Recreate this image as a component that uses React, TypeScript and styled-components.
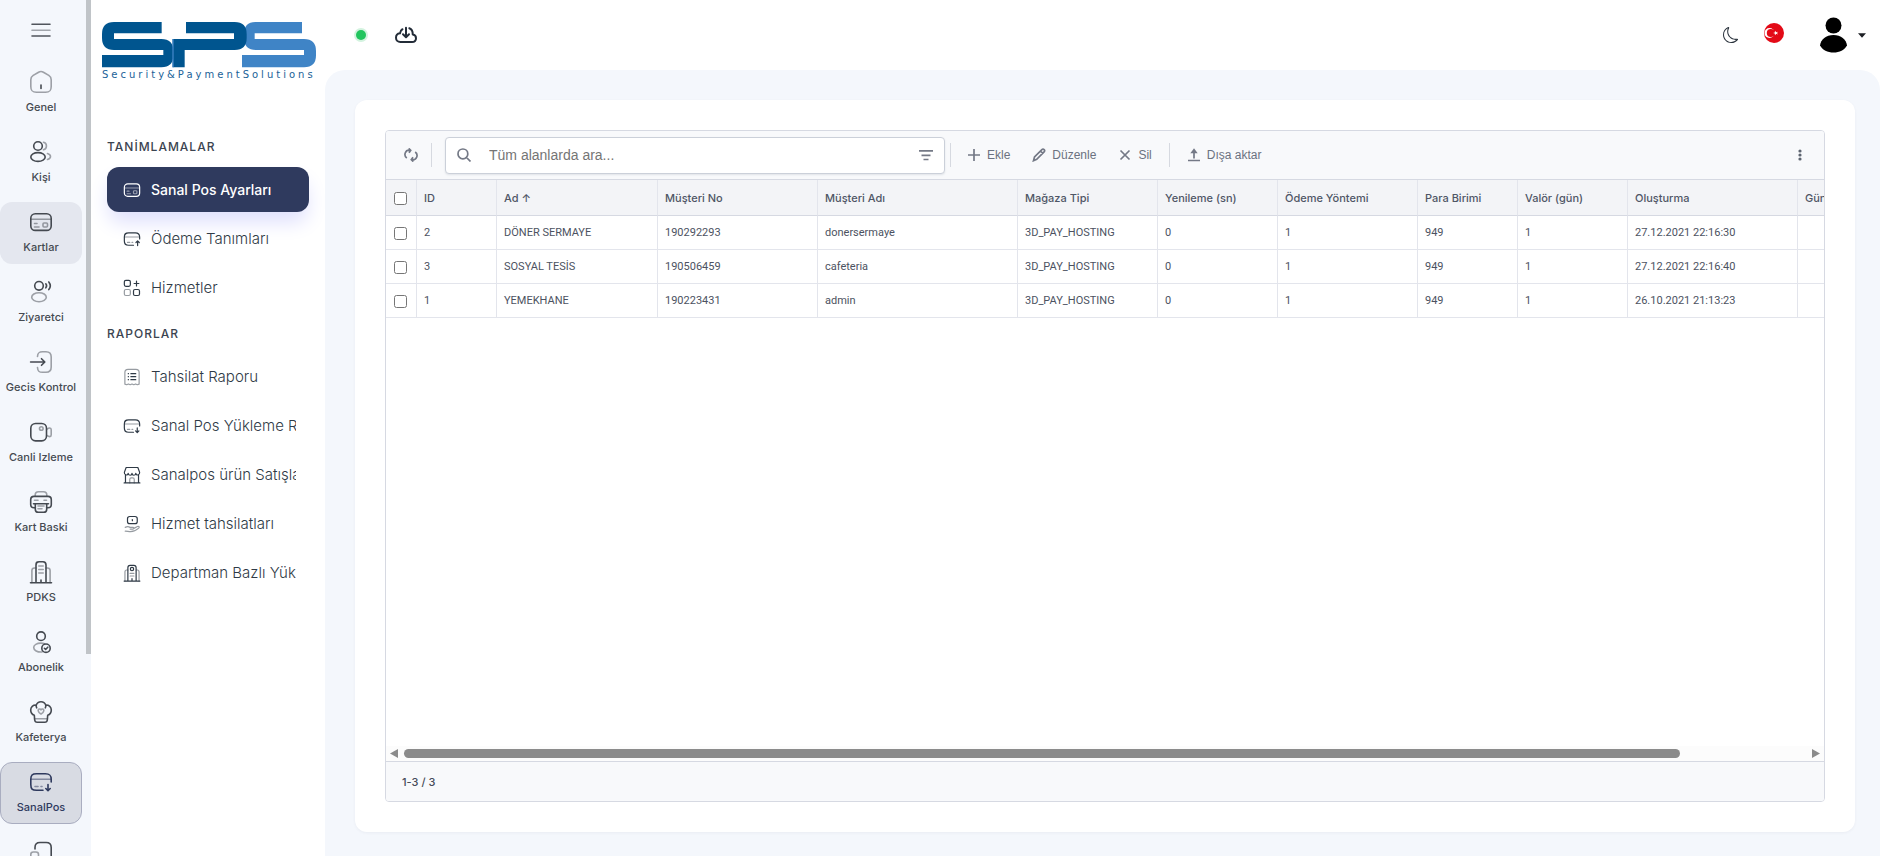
import React from 'react';
import styled, { createGlobalStyle, css } from 'styled-components';
import { BsMoon } from 'react-icons/bs';

const GlobalStyle = createGlobalStyle`
  *, *::before, *::after { box-sizing: border-box; }
  body { margin: 0; background: #fff; font-family: Inter, "Liberation Sans", sans-serif; color: #3f4650; }
  button, input { font: inherit; color: inherit; }
  button { background: none; border: 0; padding: 0; cursor: pointer; }
  a { color: inherit; text-decoration: none; }
`;

/* ---------- icons ---------- */

const IconSvg = styled.svg<{ $size: number }>`
  display: block;
  flex: none;
  width: ${p => p.$size}px;
  height: ${p => p.$size}px;
  fill: none;
  stroke: currentColor;
  stroke-width: 1.6;
  stroke-linecap: round;
  stroke-linejoin: round;
`;

const Faint = styled.g`
  opacity: 0.5;
`;

const drawings = {
  home: (
    <>
      <Faint><path d="M1.8 9.8c0-2.2.6-3.2 2.4-4.4L9.600 2.200c1.700-1 3.100-1 4.800 0l5.400 3.200c1.800 1.200 2.400 2.200 2.400 4.400v6.700c0 4.300-1.300 5.700-5.600 5.700H7.400c-4.300 0-5.600-1.400-5.600-5.700z" /></Faint>
      <path d="M12 15v3.500" />
    </>
  ),
  people: (
    <>
      <circle cx="9" cy="6" r="4.300" />
      <ellipse cx="9" cy="17" rx="7.200" ry="4.400" />
      <Faint><path d="M14.500 2.300a3.800 3.800 0 0 1 0 7.400M18.500 13.500c4 1.200 4 4.800 0 6" /></Faint>
    </>
  ),
  card: (
    <>
      <rect x="1.800" y="3.800" width="20.400" height="16.600" rx="4.500" />
      <Faint><path d="M2 9.300h20M5.500 13.500H8M5.500 17H10" /><rect x="14" y="13" width="4.500" height="4" rx="1" /></Faint>
    </>
  ),
  visitor: (
    <>
      <circle cx="10" cy="5.800" r="4.300" />
      <path d="M16.800 3.800q1.600 2 0 4M19.800 2q3 3.800 0 7.600" />
      <Faint><ellipse cx="10" cy="17.200" rx="7.300" ry="4.500" /></Faint>
    </>
  ),
  enter: (
    <>
      <Faint><path d="M8.500 6.500c.2-3.500 1.300-4.800 5-4.800h3.500c3.800 0 5.200 1.400 5.200 5.200v10.200c0 3.800-1.400 5.200-5.200 5.200h-3.500c-3.700 0-4.800-1.300-5-4.800" /></Faint>
      <path d="M1.600 12h14M12.500 8.700 15.800 12l-3.300 3.300" />
    </>
  ),
  camera: (
    <>
      <rect x="1.800" y="3.500" width="15.700" height="17.400" rx="4.800" />
      <Faint><circle cx="12.300" cy="8.500" r="1.800" /><path d="M17.700 9.300c2.300-1.600 4.500-2 4.500.5v5c0 2.500-2.200 2.100-4.500.5" /></Faint>
    </>
  ),
  printer: (
    <>
      <Faint><path d="M6.200 6.200V5c0-2.400 1-3.300 3.300-3.300h5c2.300 0 3.300.9 3.300 3.300v1.200M5.500 10.200H9M15 10.200h2.500M9 16h6M9 18.800h4" /></Faint>
      <path d="M6.300 17.800H5c-2.300 0-3.300-1-3.300-3.300V9.700c0-2.300 1-3.300 3.300-3.300h14c2.300 0 3.300 1 3.300 3.300v4.800c0 2.300-1 3.300-3.300 3.300h-1.300" />
      <path d="M4.500 13.700h15M6.300 13.700v5.500c0 2.300.8 3.100 3.100 3.100h5.200c2.300 0 3.100-.8 3.100-3.100v-5.500" />
    </>
  ),
  building: (
    <>
      <path d="M1.500 22.800h21M7 22.800V5c0-2.500.8-3.300 3-3.300h4c2.200 0 3 .8 3 3.300v17.800M12 22.500V20" />
      <Faint><path d="M7 8H5.500C3.600 8 2.900 8.700 2.900 10.600v12M17 8h1.500c1.900 0 2.600.7 2.600 2.600v12M9.800 6h4.400M9.800 9.500h4.400M9.800 13h4.400" /></Faint>
    </>
  ),
  tower: (
    <>
      <path d="M1.500 22.800h21M6.500 22.800V5c0-2.500.8-3.300 3-3.300h5c2.200 0 3 .8 3 3.300v17.800M12 22.500V19.500" />
      <circle cx="12" cy="6.800" r="2.200" />
      <Faint><path d="M6.500 8H5C3.300 8 2.600 8.700 2.600 10.600v12M17.500 8H19c1.700 0 2.400.7 2.400 2.600v12M9.500 12.500h5M9.500 16h5" /></Faint>
    </>
  ),
  subscriber: (
    <>
      <circle cx="12" cy="6.200" r="4.300" />
      <Faint><path d="M13 22c-4.600.3-8.300-1.600-8.300-4.500 0-2.600 3.200-4.400 7.300-4.400 1.600 0 2.600.2 3.600.6" /></Faint>
      <circle cx="17" cy="18.200" r="4.200" />
      <path d="m15.400 18.300 1.200 1.200 2.200-2.300" />
    </>
  ),
  chef: (
    <>
      <path d="M5.300 15.300C3 14.500 1.700 12.300 1.700 10c0-3 2.300-5.200 5.600-4.900C8 3 9.800 1.700 12 1.700S16 3 16.700 5.100c3.300-.3 5.600 1.900 5.600 4.900 0 2.300-1.300 4.500-3.600 5.300l-.4 4.700c-.2 1.700-.9 2.300-2.500 2.300H8.200c-1.600 0-2.300-.6-2.500-2.300zM7.300 5.100c-.3 1 0 2 .4 2.700M16.700 5.100c.3 1 0 2-.4 2.700" />
      <Faint><path d="M5.600 18.800h12.800M12 14c-3.500-2-3.300-4.800-1.700-5 .8-.1 1.400.3 1.700.9.300-.6.900-1 1.700-.9 1.600.2 1.800 3-1.700 5z" /></Faint>
    </>
  ),
  cardDown: (
    <>
      <path d="M14 20.300H7.500c-4.300 0-5.700-1.400-5.700-5.700V9.500c0-4.300 1.400-5.700 5.700-5.700h9c4.300 0 5.700 1.400 5.700 5.700v2.500" />
      <path d="M19 14.500v6M16.800 18.500 19 20.700l2.200-2.200" />
      <Faint><path d="M2 9.300h20M6 16.500h3M12 16.500h1" /></Faint>
    </>
  ),
  cardUp: (
    <>
      <path d="M14 20.300H7.500c-4.300 0-5.700-1.400-5.700-5.700V9.500c0-4.300 1.400-5.700 5.700-5.700h9c4.300 0 5.700 1.400 5.700 5.700v2.500" />
      <path d="M19.500 20.700v-6M17.300 16.700l2.200-2.200 2.200 2.200" />
      <Faint><path d="M2 9.300h20M6 16.500h3M12 16.500h1" /></Faint>
    </>
  ),
  devices: (
    <>
      <path d="M6 9V7.500c0-3.700 1.300-5 5-5h6.200c3.700 0 5 1.300 5 5V17c0 3.700-1.300 5-5 5H13" />
      <Faint><rect x="1.800" y="12" width="7.700" height="10.500" rx="2.500" /></Faint>
    </>
  ),
  widgets: (
    <>
      <rect x="1.800" y="1.800" width="8" height="8" rx="2" />
      <path d="M18 2.800v6.400M14.800 6h6.400" />
      <rect x="14" y="14" width="8" height="8" rx="2" />
      <Faint><rect x="1.800" y="14" width="8" height="8" rx="2" /></Faint>
    </>
  ),
  report: (
    <>
      <Faint><path d="M2.500 21.500V6c0-3.200 1-4.200 4.200-4.200h10.600c3.200 0 4.200 1 4.200 4.200v15.500l-2.400.8-2.300-1-2.400 1-2.400-1-2.400 1-2.400-1-2.300 1z" /></Faint>
      <path d="M7 7.500h.3M10.500 7.500H17M7 11.500h.3M10.500 11.500H17M7 15.500h.3M10.500 15.500H17" />
    </>
  ),
  shop: (
    <>
      <path d="M1.500 22.500h21M3.300 12v10.500M20.700 12v10.500M4.200 2h15.600l2.400 6.500c.3 4-4.300 4.700-5.100 1.200-.8 3.500-4.900 3.500-5.100 0-.2 3.500-4.300 3.500-5.100 0-.8 3.500-5.400 2.800-5.100-1.200z" />
      <Faint><path d="M9 22.500V18c0-1.500.6-2.200 2-2.200h2c1.400 0 2 .7 2 2.200v4.500" /></Faint>
    </>
  ),
  handMoney: (
    <>
      <rect x="6" y="2" width="13" height="9.500" rx="3" />
      <path d="M12.500 6v1.500" />
      <Faint><path d="M3 16.500c2.500-1.500 4.500-1.300 6.500 0h3.500c2 0 2 2.200 0 2.200H9.500M14.500 17.800l4.800-2.500c1.800-.8 3.200.8 1.700 2.200-3.500 3.200-6.500 4.700-11 4.700-2.500 0-4.500-.7-7-.7" /></Faint>
    </>
  ),
  menu: (
    <>
      <path d="M3 6.300h18M3 18h18" />
      <Faint><path d="M3 12.200h18" /></Faint>
    </>
  ),
};

type IconName = keyof typeof drawings;

const Icon = ({ name, size = 24 }: { name: IconName; size?: number }) => (
  <IconSvg $size={size} viewBox="0 0 24 24" aria-hidden="true">{drawings[name]}</IconSvg>
);

const ToolSvg = styled.svg`
  display: block;
  flex: none;
  width: 14px;
  height: 14px;
  fill: none;
  stroke: #747986;
  stroke-width: 1.7;
`;

const toolDrawings = {
  refresh: <path d="M6.500 2.200H5.600A4.300 4.300 0 0 0 2.800 10M4.700.4 6.700 2.300 5 4.800M7.600 11.800h.8A4.300 4.300 0 0 0 11.200 4M9.300 13.600l-2-1.900L9 9.200" />,
  search: <path d="M10.800 5.900a4.900 4.900 0 1 1-9.800 0 4.900 4.900 0 0 1 9.800 0zM9.500 9.500l4 4" />,
  filter: <path d="M0 2.800h14M2.500 7.300h9M4.500 11.500h5" />,
  plus: <path d="M7 1v12M1 7h12" />,
  pencil: <path d="M1.500 12.700l1-3.700L9.900 1.600c.7-.7 1.600-.6 2.200 0s.7 1.500 0 2.200L4.700 11.300zM8.500 3l2.300 2.300" />,
  cross: <path d="M2.500 2.500l9 9M11.500 2.500l-9 9" />,
  upload: <path d="M1 12.500h12M7 10.500V3M7 1.800 5 4.500h4z" />,
};

const ToolIcon = ({ name }: { name: keyof typeof toolDrawings }) => (
  <ToolSvg viewBox="0 0 14 14" aria-hidden="true">{toolDrawings[name]}</ToolSvg>
);

/* ---------- shell ---------- */

const Shell = styled.div`
  display: flex;
  height: 100vh;
  overflow: hidden;
`;

const Rail = styled.nav`
  flex: none;
  width: 91px;
  display: flex;
  justify-content: space-between;
  align-items: flex-start;
  background: #f4f7fc;
`;

const RailList = styled.div`
  width: 82px;
  height: 100%;
  display: flex;
  flex-direction: column;
  gap: 8px;
  overflow: hidden;
`;

const RailThumb = styled.div`
  width: 5px;
  height: 654px;
  background: #c0c4c8;
`;

const RailToggle = styled.button`
  flex: none;
  display: grid;
  place-items: center;
  height: 54px;
  padding-top: 6px;
  color: #50555c;
`;

const RailLink = styled.a<{ $state?: 'hover' | 'active' }>`
  flex: none;
  display: flex;
  flex-direction: column;
  align-items: center;
  height: 62px;
  padding-top: 7px;
  border: 1px solid transparent;
  border-radius: 12px;
  font-size: 11px;
  font-weight: 500;
  line-height: 26px;
  white-space: nowrap;
  color: #454a51;
  ${p => p.$state === 'hover' && css`background: #e4e7ef;`}
  ${p => p.$state === 'active' && css`
    background: #d8dbe3;
    border-color: #a9adc0;
    color: #2f3a5e;
  `}
`;

const railItems: { label: string; icon: IconName; state?: 'hover' | 'active' }[] = [
  { label: 'Genel', icon: 'home' },
  { label: 'Kişi', icon: 'people' },
  { label: 'Kartlar', icon: 'card', state: 'hover' },
  { label: 'Ziyaretci', icon: 'visitor' },
  { label: 'Gecis Kontrol', icon: 'enter' },
  { label: 'Canli Izleme', icon: 'camera' },
  { label: 'Kart Baski', icon: 'printer' },
  { label: 'PDKS', icon: 'building' },
  { label: 'Abonelik', icon: 'subscriber' },
  { label: 'Kafeterya', icon: 'chef' },
  { label: 'SanalPos', icon: 'cardDown', state: 'active' },
];

const Sidebar = styled.aside`
  flex: none;
  width: 234px;
  padding: 22px 16px 0;
  background: #fff;
`;

const Brand = styled.a`
  display: block;
  height: 101px;
  margin: 0 -8px 0 -5px;
  color: #1a6298;
  font: 400 10px/14px "DejaVu Sans", Verdana, sans-serif;
  letter-spacing: 3px;
  white-space: nowrap;
`;

const BrandMark = styled.svg`
  display: block;
  width: 214px;
  height: 46px;
`;

const Section = styled.section`
  margin-top: 15px;
`;

const SectionTitle = styled.h2`
  margin: 0 0 11px;
  font-size: 12px;
  font-weight: 500;
  line-height: 18px;
  letter-spacing: 1px;
  color: #3b4450;
`;

const MenuList = styled.div`
  display: flex;
  flex-direction: column;
  gap: 4px;
`;

const MenuLink = styled.a<{ $active?: boolean }>`
  display: flex;
  align-items: center;
  gap: 10px;
  height: 45px;
  padding: 0 13px 0 16px;
  border-radius: 12px;
  font-size: ${p => (p.$active ? 14 : 15)}px;
  font-weight: ${p => (p.$active ? 500 : 300)};
  color: ${p => (p.$active ? '#fff' : '#2f3a46')};
  ${p => p.$active && css`
    background: #2f3a5e;
    box-shadow: 0 12px 20px -2px #dedffc;
  `}
`;

const MenuText = styled.span`
  flex: 1;
  min-width: 0;
  overflow: hidden;
  white-space: nowrap;
`;

const sections: { title: string; items: { label: string; icon: IconName; active?: boolean }[] }[] = [
  {
    title: 'TANİMLAMALAR',
    items: [
      { label: 'Sanal Pos Ayarları', icon: 'card', active: true },
      { label: 'Ödeme Tanımları', icon: 'cardUp' },
      { label: 'Hizmetler', icon: 'widgets' },
    ],
  },
  {
    title: 'RAPORLAR',
    items: [
      { label: 'Tahsilat Raporu', icon: 'report' },
      { label: 'Sanal Pos Yükleme Raporu', icon: 'cardDown' },
      { label: 'Sanalpos ürün Satışları', icon: 'shop' },
      { label: 'Hizmet tahsilatları', icon: 'handMoney' },
      { label: 'Departman Bazlı Yükleme', icon: 'tower' },
    ],
  },
];

const Main = styled.main`
  flex: 1;
  min-width: 0;
  display: flex;
  flex-direction: column;
`;

/* ---------- top bar ---------- */

const TopBar = styled.header`
  flex: none;
  display: flex;
  align-items: center;
  justify-content: space-between;
  height: 70px;
  padding: 0 14px 0 31px;
`;

const TopGroup = styled.div`
  display: flex;
  align-items: center;
  gap: 28px;
`;

const StatusDot = styled.span`
  width: 10px;
  height: 10px;
  border-radius: 50%;
  background: #22c55e;
  box-shadow: 0 0 0 2px #d3f3df;
`;

const IconButton = styled.button`
  display: grid;
  place-items: center;
  color: #2b333d;
`;

const CloudSvg = styled.svg`
  width: 24px;
  height: 18px;
  fill: none;
  stroke: #232c38;
  stroke-width: 2;
  stroke-linecap: round;
  stroke-linejoin: round;
`;

const FlagSvg = styled.svg`
  width: 20px;
  height: 20px;
  margin: 0 8px 4px -3px;
`;

const UserButton = styled(IconButton)`
  display: flex;
  align-items: center;
  gap: 10px;
`;

/* ---------- content ---------- */

const Content = styled.div`
  flex: 1;
  min-height: 0;
  display: flex;
  padding: 30px 25px 24px 30px;
  border-radius: 20px 20px 0 0;
  background: #f4f7fc;
`;

const Card = styled.div`
  flex: 1;
  min-width: 0;
  display: flex;
  padding: 30px;
  border-radius: 12px;
  background: #fff;
  box-shadow: 0 1px 3px rgba(60, 70, 100, 0.06);
`;

const Grid = styled.div`
  flex: 1;
  min-width: 0;
  display: flex;
  flex-direction: column;
  overflow: hidden;
  border: 1px solid #d6d9e2;
  border-radius: 4px;
`;

const Toolbar = styled.div`
  flex: none;
  display: flex;
  align-items: center;
  height: 49px;
  padding: 0 17px 0 18px;
  border-bottom: 1px solid #d6d9e2;
  background: #f8f9fb;
`;

const Divider = styled.span<{ $space: number }>`
  flex: none;
  width: 1px;
  height: 24px;
  margin: 0 ${p => p.$space}px;
  background: #d6d9e0;
`;

const SearchBox = styled.label`
  flex: 0 1 500px;
  display: flex;
  align-items: center;
  gap: 18px;
  height: 37px;
  padding: 0 11px;
  border: 1px solid #cbd0d9;
  border-radius: 4px;
  background: #fff;
  box-shadow: 0 1px 2px rgba(60, 70, 100, 0.12);
`;

const SearchInput = styled.input`
  flex: 1;
  min-width: 0;
  height: 30px;
  padding: 0;
  border: 0;
  outline: 0;
  background: none;
  font: 400 14px "Liberation Sans", Arial, sans-serif;
  &::placeholder { color: #757575; }
`;

const ToolButton = styled.button`
  display: flex;
  align-items: center;
  gap: 6px;
  height: 32px;
  padding: 0 11px;
  font: 400 12px "Liberation Sans", Arial, sans-serif;
  color: #6b7280;
`;

const MoreButton = styled(IconButton)`
  width: 14px;
  height: 24px;
  margin-left: auto;
  color: #5d6470;
`;

const TableArea = styled.div`
  flex: 1;
  min-height: 0;
  overflow: hidden;
`;

const Table = styled.table`
  width: 1585px;
  table-layout: fixed;
  border-collapse: separate;
  border-spacing: 0;
`;

const cell = css`
  padding: 0 8px 0 7px;
  border-right: 1px solid #e3e5ec;
  text-align: left;
  white-space: nowrap;
  font-size: 11px;
`;

const HeadCell = styled.th`
  ${cell}
  height: 36px;
  border-bottom: 1px solid #d6d9e2;
  background: #f3f4f7;
  font-weight: 500;
  color: #4f5666;
`;

const BodyCell = styled.td`
  ${cell}
  height: 34px;
  border-bottom: 1px solid #e3e5ec;
  font-family: Roboto, "Liberation Sans", sans-serif;
  color: #4c5261;
`;

const Check = styled.input`
  display: block;
  width: 13px;
  height: 13px;
  margin: 1px 0 0 1px;
`;

const ScrollBar = styled.div`
  flex: none;
  display: flex;
  align-items: center;
  gap: 6px;
  height: 15px;
  padding: 0 4px;
  background: #fcfcfc;
`;

const ScrollArrow = styled.svg`
  flex: none;
  width: 8px;
  height: 9px;
  fill: #8b8b8b;
`;

const ScrollTrack = styled.div`
  flex: 1;
`;

const ScrollThumb = styled.div`
  width: 91%;
  height: 9px;
  border-radius: 5px;
  background: #8b8b8b;
`;

const Footer = styled.div`
  flex: none;
  display: flex;
  align-items: center;
  height: 40px;
  padding: 0 16px;
  border-top: 1px solid #d6d9e2;
  background: #f8f9fb;
  font-size: 11px;
  font-weight: 500;
  color: #454b57;
`;

const columns: [string, number][] = [
  ['ID', 80], ['Ad ↑', 161], ['Müşteri No', 160], ['Müşteri Adı', 200], ['Mağaza Tipi', 140],
  ['Yenileme (sn)', 120], ['Ödeme Yöntemi', 140], ['Para Birimi', 100], ['Valör (gün)', 110],
  ['Oluşturma', 170], ['Güncelleme', 173],
];

const rows = [
  ['2', 'DÖNER SERMAYE', '190292293', 'donersermaye', '3D_PAY_HOSTING', '0', '1', '949', '1', '27.12.2021 22:16:30', ''],
  ['3', 'SOSYAL TESİS', '190506459', 'cafeteria', '3D_PAY_HOSTING', '0', '1', '949', '1', '27.12.2021 22:16:40', ''],
  ['1', 'YEMEKHANE', '190223431', 'admin', '3D_PAY_HOSTING', '0', '1', '949', '1', '26.10.2021 21:13:23', ''],
];

export default function App() {
  return (
    <Shell>
      <GlobalStyle />
      <Rail aria-label="Modüller">
        <RailList>
          <RailToggle aria-label="Menü"><Icon name="menu" /></RailToggle>
          {railItems.map(item => (
            <RailLink key={item.label} href="#" $state={item.state}>
              <Icon name={item.icon} />
              {item.label}
            </RailLink>
          ))}
          <RailLink href="#" aria-label="Cihazlar"><Icon name="devices" /></RailLink>
        </RailList>
        <RailThumb />
      </Rail>

      <Sidebar>
        <Brand href="#">
          <BrandMark viewBox="0 0 642 138" aria-label="SPS">
            <path fill="#3f84c6" d="M460 0H600V34H458V51H606Q642 51 642 87V100Q642 136 606 136H420V99H606V84H462Q426 84 426 48V36Q426 0 460 0Z" />
            <path fill="#00558f" d="M36 0H179V34H36V51H178Q214 51 214 87V100Q214 136 178 136H0V99H184V84H36Q0 84 0 48V36Q0 0 36 0Z" />
            <path fill="#00558f" d="M252 0H398Q434 0 434 36V48Q434 84 398 84H248V136H212V51H396V34H252Z" />
            <path fill="#3f84c6" d="M211 51h4v85h-4z" />
          </BrandMark>
          Security&amp;PaymentSolutions
        </Brand>
        {sections.map(section => (
          <Section key={section.title}>
            <SectionTitle>{section.title}</SectionTitle>
            <MenuList>
              {section.items.map(item => (
                <MenuLink key={item.label} href="#" $active={item.active}>
                  <Icon name={item.icon} size={18} />
                  <MenuText>{item.label}</MenuText>
                </MenuLink>
              ))}
            </MenuList>
          </Section>
        ))}
      </Sidebar>

      <Main>
        <TopBar>
          <TopGroup>
            <StatusDot />
            <IconButton aria-label="İndir">
              <CloudSvg viewBox="0 0 24 18">
                <path d="M8.500 3.200A5.300 5.300 0 0 0 6 7.300C3.700 7.600 2 9.300 2 11.700 2 14.300 3.900 16 6.300 16H18c2.300 0 4-1.600 4-3.800 0-2.100-1.400-3.600-3.300-3.800C18.800 5.500 17.500 3 15.300 2.200M12 1.800v9M9 8.300l3 3 3-3" />
              </CloudSvg>
            </IconButton>
          </TopGroup>
          <TopGroup>
            <IconButton aria-label="Koyu tema"><BsMoon size={16} /></IconButton>
            <IconButton aria-label="Türkçe">
              <FlagSvg viewBox="0 0 20 20">
                <circle cx="10" cy="10" r="10" fill="#e30a17" />
                <circle cx="5.500" cy="10" r="5" fill="#fff" />
                <circle cx="6.800" cy="10" r="4" fill="#e30a17" />
                <path fill="#fff" d="M9 10l1.900-.5.200-1.700 1.100 1.400 1.800-.5-1 1.300 1 1.400-1.800-.6-1.100 1.400-.2-1.700z" />
              </FlagSvg>
            </IconButton>
            <UserButton aria-label="Kullanıcı">
              <svg width="28" height="36" viewBox="0 0 28 36" fill="#000">
                <circle cx="13.500" cy="8.500" r="8" />
                <path d="M0 28.500C.8 22.500 6 18 13.500 18S26.200 22.500 27 28.500C24.500 33 19.500 35.500 13.500 35.500S2.500 33 0 28.500z" />
              </svg>
              <svg width="8" height="5" viewBox="0 0 8 5" fill="#1c1f24"><path d="M0 .3h8L4 4.800z" /></svg>
            </UserButton>
          </TopGroup>
        </TopBar>

        <Content>
          <Card>
            <Grid>
              <Toolbar>
                <IconButton aria-label="Yenile"><ToolIcon name="refresh" /></IconButton>
                <Divider $space={13} />
                <SearchBox>
                  <ToolIcon name="search" />
                  <SearchInput type="text" placeholder="Tüm alanlarda ara..." aria-label="Tüm alanlarda ara" />
                  <ToolIcon name="filter" />
                </SearchBox>
                <Divider $space={5} />
                <ToolButton><ToolIcon name="plus" />Ekle</ToolButton>
                <ToolButton><ToolIcon name="pencil" />Düzenle</ToolButton>
                <ToolButton><ToolIcon name="cross" />Sil</ToolButton>
                <Divider $space={6} />
                <ToolButton><ToolIcon name="upload" />Dışa aktar</ToolButton>
                <MoreButton aria-label="Diğer">
                  <svg width="4" height="12" viewBox="0 0 4 12" fill="currentColor">
                    <circle cx="2" cy="2" r="1.600" /><circle cx="2" cy="6" r="1.600" /><circle cx="2" cy="10" r="1.600" />
                  </svg>
                </MoreButton>
              </Toolbar>
              <TableArea>
                <Table>
                  <colgroup>
                    <col width={31} />
                    {columns.map(([name, width]) => <col key={name} width={width} />)}
                  </colgroup>
                  <thead>
                    <tr>
                      <HeadCell><Check type="checkbox" aria-label="Tümünü seç" /></HeadCell>
                      {columns.map(([name]) => <HeadCell key={name}>{name}</HeadCell>)}
                    </tr>
                  </thead>
                  <tbody>
                    {rows.map(row => (
                      <tr key={row[0]}>
                        <BodyCell><Check type="checkbox" aria-label={`${row[1]} seç`} /></BodyCell>
                        {row.map((value, i) => <BodyCell key={i}>{value}</BodyCell>)}
                      </tr>
                    ))}
                  </tbody>
                </Table>
              </TableArea>
              <ScrollBar>
                <ScrollArrow viewBox="0 0 8 9"><path d="M8 0v9L0 4.500z" /></ScrollArrow>
                <ScrollTrack><ScrollThumb /></ScrollTrack>
                <ScrollArrow viewBox="0 0 8 9"><path d="M0 0v9l8-4.500z" /></ScrollArrow>
              </ScrollBar>
              <Footer>1-3 / 3</Footer>
            </Grid>
          </Card>
        </Content>
      </Main>
    </Shell>
  );
}
